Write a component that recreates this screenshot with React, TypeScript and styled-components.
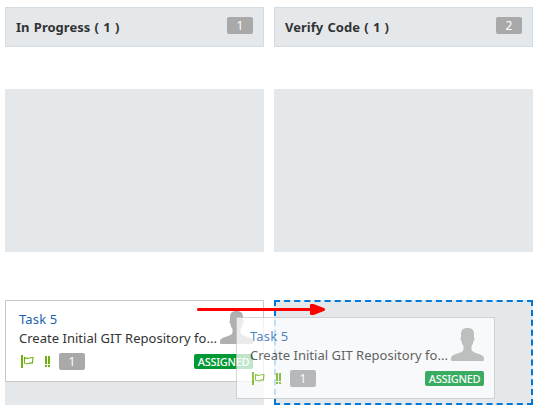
import React from 'react';
import styled, { createGlobalStyle } from 'styled-components';

const GlobalStyle = createGlobalStyle`
  * { box-sizing: border-box; }
  body {
    margin: 0;
    background: #fff;
    font-family: 'Noto Sans', 'Open Sans', sans-serif;
    color: #333;
    overflow: hidden;
  }
`;

const Board = styled.main`
  position: relative;
  width: 538px;
  height: 410px;
  padding: 7px 5px 5px;
  display: grid;
  grid-template-columns: 259px 259px;
  grid-template-rows: 40px 42px 163px 48px 105px;
  column-gap: 10px;
`;

const ColumnHeader = styled.header`
  grid-row: 1;
  display: flex;
  justify-content: space-between;
  align-items: flex-start;
  padding: 9px 10px 0;
  background: #e4e8eb;
  border: 1px solid #d3dce3;
`;

const ColumnTitle = styled.h2`
  margin: 0;
  font-size: 13px;
  line-height: 20px;
  font-weight: 700;
  letter-spacing: 0.03px;
  word-spacing: 0.8px;
  white-space: pre;
`;

const Count = styled.span`
  display: block;
  width: 26px;
  height: 17px;
  border-radius: 2px;
  background: #a9a9a9;
  color: #fff;
  font-size: 12px;
  line-height: 17px;
  text-align: center;
`;

const Lane = styled.section<{ $row: number; $target?: boolean }>`
  grid-row: ${p => p.$row};
  background: #e4e8eb;
  border: ${p => (p.$target ? '2px dashed #0078d7' : '0')};
`;

const CardBox = styled.article`
  width: 259px;
  height: 82px;
  padding: 9px 10px 0 13px;
  background: #fff;
  border: 1px solid #c8c8c8;
`;

const CardTop = styled.div`
  display: flex;
  justify-content: space-between;
  height: 43px;
`;

const CardText = styled.div`
  width: 200px;
  font-size: 13px;
  line-height: 19px;
  white-space: nowrap;
`;

const TaskLink = styled.a`
  display: block;
  color: #1a62ab;
  letter-spacing: 0.15px;
`;

const Description = styled.div`
  letter-spacing: 0.02px;
`;

const CardFooter = styled.div`
  display: flex;
  align-items: flex-start;
`;

const Status = styled.span`
  width: 59px;
  height: 15px;
  margin: 1px 0 0 auto;
  border-radius: 2px;
  background: #009933;
  color: #fff;
  font-size: 11px;
  font-weight: 500;
  line-height: 15px;
  text-align: center;
  letter-spacing: -0.3px;
`;

const AvatarIcon = styled.svg`
  display: block;
  width: 33px;
  height: 34px;
  flex: none;
`;

const FlagIcon = styled.svg`
  width: 13px;
  height: 13px;
  margin: 2px 0 0 2px;
`;

const PriorityIcon = styled.svg`
  width: 5px;
  height: 11px;
  margin: 3px 9px 0 11px;
`;

const DragGhost = styled.div`
  position: absolute;
  left: 236px;
  top: 317px;

  ${CardBox} {
    background: #fff;
    opacity: 0.75;
  }
`;

const Arrow = styled.svg`
  position: absolute;
  left: 197px;
  top: 303px;
  width: 130px;
  height: 13px;
`;

const Header = ({ title, count }: { title: string; count: number }) => (
  <ColumnHeader>
    <ColumnTitle>{title}</ColumnTitle>
    <Count>{count}</Count>
  </ColumnHeader>
);

const TaskCard = () => (
  <CardBox>
    <CardTop>
      <CardText>
        <TaskLink>Task 5</TaskLink>
        <Description>Create Initial GIT Repository fo...</Description>
      </CardText>
      <AvatarIcon viewBox="0 0 33 34">
        <path
          fill="#b0b0b0"
          d="M16.500 1C12 1 10 3 10 7v3.500c-.8.500-.7 2.500.3 3.200.4 2.300 1.200 4 2.200 5.300v3.500c0 1.500-1.500 2.300-4.500 3.500C4 27.500 0 28.200 0 31.500V33q0 1 1.500 1h30q1.500 0 1.500-1v-1.500c0-3.300-4-4-8-5.500-3-1.200-4.500-2-4.500-3.500V19c1-1.300 1.800-3 2.200-5.300 1-.7 1.100-2.700.3-3.200V7c0-4-2-6-6.500-6z"
        />
      </AvatarIcon>
    </CardTop>
    <CardFooter>
      <FlagIcon viewBox="0 0 13 13">
        <path fill="#6db010" d="M0 0h2v13H0z" />
        <path
          fill="none"
          stroke="#6db010"
          strokeWidth="1.1"
          d="M3.500 2.500c2 1.300 3.500 1.100 5 .5 1-.5 2-.6 3.500-.5l-.6 5.500c-1.500-.3-2.500 0-3.400.4-1.500.6-3 .6-4.500-.3z"
        />
      </FlagIcon>
      <PriorityIcon viewBox="0 0 5 11">
        <path fill="#6db010" d="M0 0h2v8H0zM0 9h2v2H0zM3 0h2v8H3zM3 9h2v2H3z" />
      </PriorityIcon>
      <Count>1</Count>
      <Status>ASSIGNED</Status>
    </CardFooter>
  </CardBox>
);

export default function App() {
  return (
    <>
      <GlobalStyle />
      <Board>
        <Header title="In Progress ( 1 )" count={1} />
        <Header title="Verify Code ( 1 )" count={2} />
        <Lane $row={3} />
        <Lane $row={3} />
        <Lane $row={5}>
          <TaskCard />
        </Lane>
        <Lane $row={5} $target />
        <DragGhost>
          <TaskCard />
        </DragGhost>
        <Arrow viewBox="0 0 130 13">
          <path
            fill="#f00"
            d="M1 5h112V2q0-1 1-1h2.500L127.500 5.300q1 1.200 0 2.400L116.500 12H114q-1 0-1-1V8H1Q0 8 0 6.500T1 5z"
          />
        </Arrow>
      </Board>
    </>
  );
}
